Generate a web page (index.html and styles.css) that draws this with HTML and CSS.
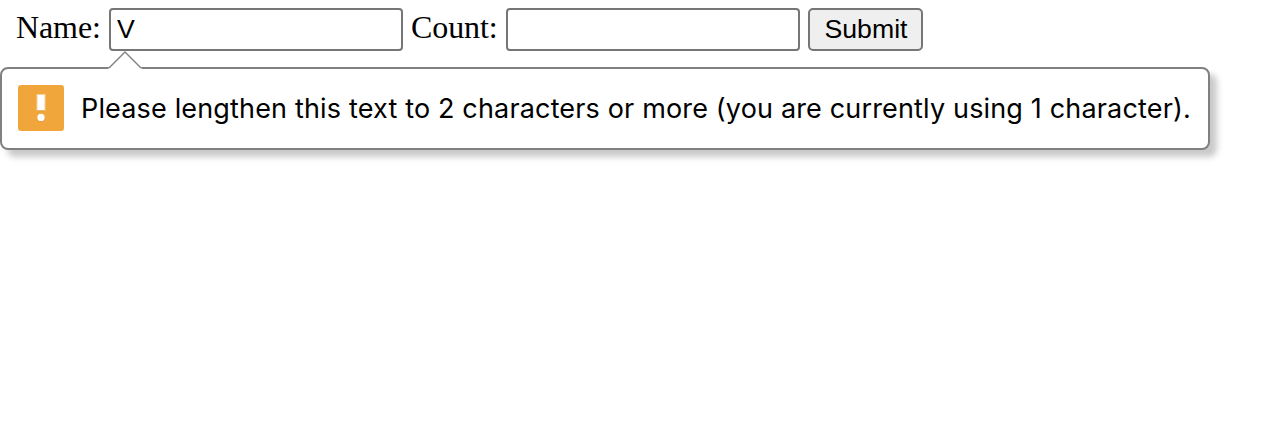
FILE: index.html
```
<!DOCTYPE html>
<html lang="en">
<head>
<meta charset="utf-8">
<title>Form</title>
<link rel="stylesheet" href="styles.css">
</head>
<body>
<form class="form">
  <label class="label label-name" for="name">Name:</label>
  <input class="field" id="name" type="text" value="V">
  <label class="label label-count" for="count">Count:</label>
  <input class="field" id="count" type="text">
  <button class="submit" type="button">Submit</button>
</form>
<div class="bubble" role="alert">
  <svg class="arrow" width="34" height="18" viewBox="0 0 34 18">
    <path d="M0 18 L1 17 L17 1 L33 17 L34 18Z" fill="#fff"/>
    <path d="M1 17 L17 1 L33 17" fill="none" stroke="#808080" stroke-width="1.4"/>
  </svg>
  <svg class="icon" width="46" height="46" viewBox="0 0 46 46">
    <rect width="46" height="46" rx="3" fill="#f1a63c"/>
    <rect x="18.5" y="9" width="9" height="17" fill="#f8cf98"/>
    <rect x="19.5" y="10" width="7" height="15" fill="#fff"/>
    <rect x="19" y="25.5" width="8" height="1" fill="#e99a3d"/>
    <circle cx="23" cy="33" r="4" fill="#e8963f"/>
    <circle cx="23" cy="32.4" r="3.7" fill="#fff"/>
  </svg>
  <span class="message">Please lengthen this text to 2 characters or more (you are currently using 1 character).</span>
</div>
</body>
</html>
```
FILE: styles.css
```
body {
  min-height: 430px;
  margin: 0;
  background: #fff;
  color: #000;
}

.form {
  display: flex;
  gap: 8px;
  height: 43px;
  margin: 0;
  padding: 8px 16px 0;
}

.label {
  font: 32px/38px "Liberation Serif", serif;
  letter-spacing: -0.1px;
  white-space: nowrap;
}

.label-name {
  width: 85px;
}

.label-count {
  width: 87px;
}

.field {
  box-sizing: border-box;
  width: 294px;
  height: 43px;
  margin: 0;
  padding: 0 6px 1px;
  border: 2px solid #767676;
  border-radius: 4px;
  outline: none;
  background: #fff;
  color: #000;
  font: 26.67px "Liberation Sans", sans-serif;
}

.submit {
  box-sizing: border-box;
  width: 115px;
  height: 43px;
  margin: 0;
  padding: 0 0 0 1px;
  border: 2px solid #767676;
  border-radius: 5px;
  background: #efefef;
  color: #000;
  font: 26.67px "Liberation Sans", sans-serif;
}

.bubble {
  position: relative;
  display: flex;
  align-items: flex-start;
  gap: 17px;
  box-sizing: border-box;
  width: 1210px;
  height: 83px;
  margin-top: 16px;
  padding: 16px 16px 0;
  border: 2px solid #808080;
  border-radius: 8px;
  background: #fff;
  box-shadow: 7px 7px 6px rgba(0, 0, 0, 0.21);
}

.arrow {
  position: absolute;
  left: 106px;
  top: -18px;
}

.icon {
  flex: none;
}

.message {
  font: 27px/48px Inter, sans-serif;
  letter-spacing: 0.16px;
  white-space: nowrap;
}
```
